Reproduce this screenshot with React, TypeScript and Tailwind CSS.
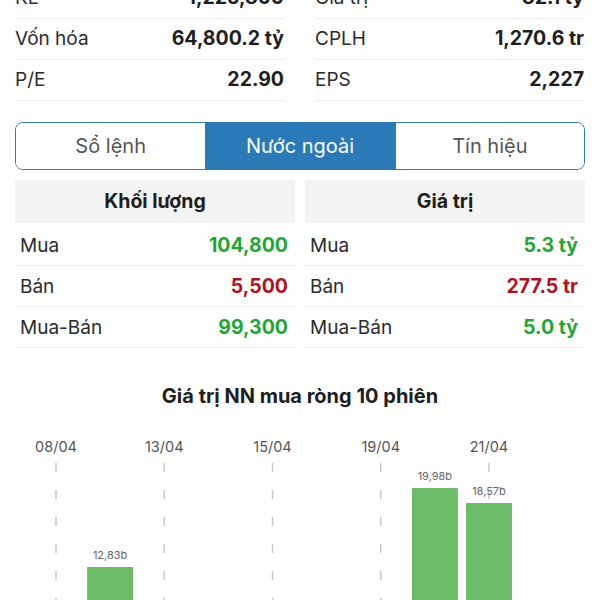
import React from "react";

const font = { fontFamily: "Inter, 'Noto Sans', 'Liberation Sans', sans-serif" };

function StatRow({ label, value }: { label: string; value: string }) {
  return (
    <div className="flex h-[41px] items-center justify-between border-b border-[#ececec] pr-[1px]">
      <span className="text-[19px] text-[#2b2b2b]">{label}</span>
      <span className="text-[19.5px] font-bold text-[#1e1e1e]">{value}</span>
    </div>
  );
}

function DataRow({ label, value, color }: { label: string; value: string; color: string }) {
  return (
    <div className="flex h-[41px] items-center justify-between border-b border-[#ececec] pl-[5px] pr-[7px] pt-[2px]">
      <span className="text-[19px] text-[#2b2b2b]">{label}</span>
      <span className={`text-[19.5px] font-bold ${color}`}>{value}</span>
    </div>
  );
}

const GREEN = "text-[#1fa733]";
const RED = "text-[#b0131d]";

export default function App() {
  const step = 108.25 / 2;
  const cx = (i: number) => 56 + step * i;
  const dateIdx = [0, 2, 4, 6, 8];
  const dates = ["08/04", "13/04", "15/04", "19/04", "21/04"];
  const bars = [
    { i: 1, top: 147, label: "12,83b" },
    { i: 7, top: 68, label: "19,98b" },
    { i: 8, top: 83, label: "18,57b" },
  ];
  return (
    <div className="h-[600px] w-[600px] overflow-hidden bg-white" style={font}>
      <div className="-mt-[22px]">
        <div className="grid grid-cols-[270px_270px] gap-x-[30px] px-[15px]">
          <div className="flex flex-col">
            <StatRow label="KL" value="1,225,800" />
            <StatRow label="Vốn hóa" value="64,800.2 tỷ" />
            <StatRow label="P/E" value="22.90" />
          </div>
          <div className="flex flex-col">
            <StatRow label="Giá trị" value="82.1 tỷ" />
            <StatRow label="CPLH" value="1,270.6 tr" />
            <StatRow label="EPS" value="2,227" />
          </div>
        </div>

        <div className="mx-[15px] mt-[21px] grid h-[48px] grid-cols-3 overflow-hidden rounded-[8px] border-[1.5px] border-[#2d7bbb]">
          <div className="flex items-center justify-center bg-white text-[20px] text-[#555]">Sổ lệnh</div>
          <div className="flex items-center justify-center bg-[#2a7ab8] text-[20px] text-white">Nước ngoài</div>
          <div className="flex items-center justify-center border-l border-[#2d7bbb] bg-white text-[20px] text-[#555]">Tín hiệu</div>
        </div>

        <div className="mt-[10px] grid grid-cols-2 gap-x-[10px] px-[15px]">
          <div className="flex flex-col">
            <div className="mb-[2px] flex h-[43px] items-center justify-center bg-[#f3f3f3] text-[19.5px] font-bold text-[#1e1e1e]">
              Khối lượng
            </div>
            <DataRow label="Mua" value="104,800" color={GREEN} />
            <DataRow label="Bán" value="5,500" color={RED} />
            <DataRow label="Mua-Bán" value="99,300" color={GREEN} />
          </div>
          <div className="flex flex-col">
            <div className="mb-[2px] flex h-[43px] items-center justify-center bg-[#f3f3f3] text-[19.5px] font-bold text-[#1e1e1e]">
              Giá trị
            </div>
            <DataRow label="Mua" value="5.3 tỷ" color={GREEN} />
            <DataRow label="Bán" value="277.5 tr" color={RED} />
            <DataRow label="Mua-Bán" value="5.0 tỷ" color={GREEN} />
          </div>
        </div>

        <div className="mt-[36px] flex h-[24px] items-center justify-center text-[20px] font-bold text-[#1e1e1e]">
          Giá trị NN mua ròng 10 phiên
        </div>

        <svg className="mt-[12px] block" width="600" height="200" viewBox="0 0 600 200">
          {dateIdx.map((d, k) => (
            <g key={d}>
              <text
                x={cx(d)}
                y={32}
                textAnchor="middle"
                fontSize="14.5"
                fill="#555"
                style={font}
              >
                {dates[k]}
              </text>
              <line
                x1={cx(d)}
                x2={cx(d)}
                y1={43}
                y2={200}
                stroke="#c9c9c9"
                strokeWidth="1.5"
                strokeDasharray="9 18"
              />
            </g>
          ))}
          {bars.map((b) => (
            <g key={b.i}>
              <rect x={cx(b.i) - 23} y={b.top} width={46} height={200 - b.top} fill="#6cbd67" />
              <text
                x={cx(b.i)}
                y={b.top - 8}
                textAnchor="middle"
                fontSize="11"
                fill="#666"
                style={font}
              >
                {b.label}
              </text>
            </g>
          ))}
        </svg>
      </div>
    </div>
  );
}
